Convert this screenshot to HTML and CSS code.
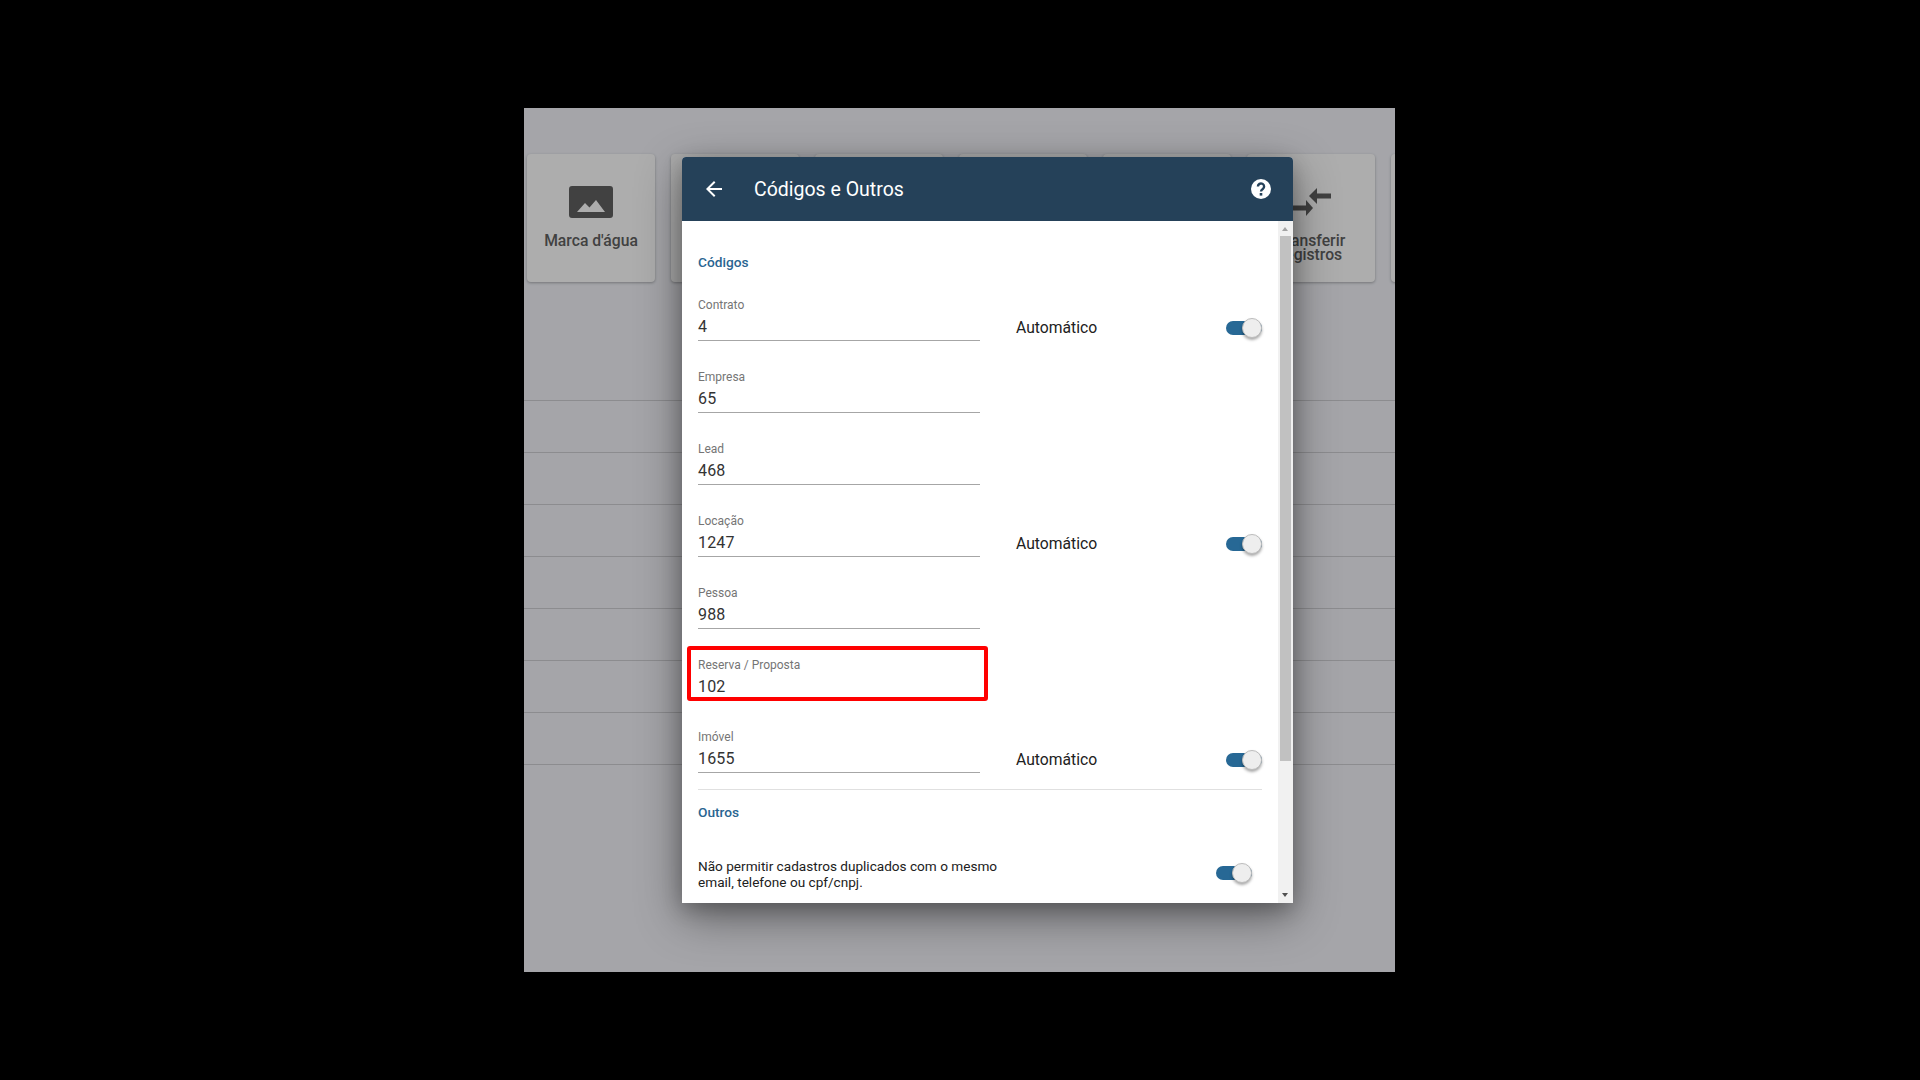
FILE: index.html
```html
<!DOCTYPE html>
<html lang="pt-BR">
<head>
    <meta charset="UTF-8">
    <meta name="viewport" content="width=device-width, initial-scale=1.0">
    <title>Códigos e Outros</title>
    <link rel="stylesheet" href="styles.css">
</head>
<body>

    <div class="stage">
        <!-- Page behind the dialog -->
        <div class="cards">
            <div class="card">
                <div class="card-icon">
                    <svg width="44" height="32" viewBox="0 0 44 32"><path fill-rule="evenodd" d="M3 0h38a3 3 0 0 1 3 3v26a3 3 0 0 1-3 3H3a3 3 0 0 1-3-3V3a3 3 0 0 1 3-3zM8 26h28l-9-12-6.500 7.500L16 17z" fill="#616161"/></svg>
                </div>
                <span class="card-label">Marca d'água</span>
            </div>
            <div class="card"></div>
            <div class="card"></div>
            <div class="card"></div>
            <div class="card"></div>
            <div class="card">
                <div class="card-icon">
                    <svg width="40" height="28" viewBox="0 0 40 28"><path d="M0 17.500h15V12l7 8-7 8v-5.500H0z M40 10.500H26V16l-8-8 8-8v5.500h14z" fill="#616161"/></svg>
                </div>
                <span class="card-label">Transferir<br>registros</span>
            </div>
            <div class="card"></div>
        </div>
        <div class="rows">
            <div class="row"></div>
            <div class="row"></div>
            <div class="row"></div>
            <div class="row"></div>
            <div class="row"></div>
            <div class="row"></div>
            <div class="row"></div>
            <div class="row"></div>
        </div>

        <div class="backdrop"></div>

        <div class="dialog">
            <header class="dialog-header">
                <svg width="24" height="24" viewBox="0 0 24 24"><path d="M20 11H7.830l5.590-5.590L12 4l-8 8 8 8 1.410-1.410L7.830 13H20v-2z" fill="#fff"/></svg>
                <h1 class="dialog-title">Códigos e Outros</h1>
                <svg class="help-icon" width="24" height="24" viewBox="0 0 24 24">
                    <circle cx="12" cy="12" r="10" fill="#fff"/>
                    <path d="M8.900 9.400a3.100 3 0 1 1 4.900 2.500c-1.200.8-1.800 1.300-1.800 2.600" fill="none" stroke="#254159" stroke-width="2.400"/>
                    <rect x="10.700" y="16" width="2.600" height="2.600" fill="#254159"/>
                </svg>
            </header>

            <div class="dialog-body">
                <div class="dialog-content">
                    <h2 class="section-title section-first">Códigos</h2>

                    <div class="field-list">
                        <div class="field-row">
                            <div class="field">
                                <label>Contrato</label>
                                <div class="field-value">4</div>
                            </div>
                            <span class="auto-label">Automático</span>
                            <span class="toggle field-toggle"><span class="knob"></span></span>
                        </div>
                        <div class="field-row">
                            <div class="field">
                                <label>Empresa</label>
                                <div class="field-value">65</div>
                            </div>
                        </div>
                        <div class="field-row">
                            <div class="field">
                                <label>Lead</label>
                                <div class="field-value">468</div>
                            </div>
                        </div>
                        <div class="field-row">
                            <div class="field">
                                <label>Locação</label>
                                <div class="field-value">1247</div>
                            </div>
                            <span class="auto-label">Automático</span>
                            <span class="toggle field-toggle"><span class="knob"></span></span>
                        </div>
                        <div class="field-row">
                            <div class="field">
                                <label>Pessoa</label>
                                <div class="field-value">988</div>
                            </div>
                        </div>
                        <div class="field-row">
                            <div class="field">
                                <label>Reserva / Proposta</label>
                                <div class="field-value">102</div>
                                <div class="highlight"></div>
                            </div>
                        </div>
                        <div class="field-row">
                            <div class="field">
                                <label>Imóvel</label>
                                <div class="field-value">1655</div>
                            </div>
                            <span class="auto-label">Automático</span>
                            <span class="toggle field-toggle"><span class="knob"></span></span>
                        </div>
                    </div>

                    <div class="divider"></div>

                    <h2 class="section-title">Outros</h2>

                    <div class="option-row">
                        <p class="option-text">Não permitir cadastros duplicados com o mesmo email, telefone ou cpf/cnpj.</p>
                        <span class="toggle option-toggle"><span class="knob"></span></span>
                    </div>
                </div>

                <div class="scrollbar">
                    <span class="arrow-up"></span>
                    <div class="scroll-thumb"></div>
                    <span class="arrow-down"></span>
                </div>
            </div>
        </div>
    </div>

</body>
</html>
```

FILE: styles.css
```css
* {
    box-sizing: border-box;
}

html, body {
    height: 100%;
}

body {
    margin: 0;
    background-color: #000;
    font-family: Roboto, sans-serif;
    display: flex;
    align-items: center;
    justify-content: center;
    overflow: hidden;
}

.stage {
    position: relative;
    width: 871px;
    height: 864px;
    margin-right: 1px;
    background-color: #f3f4fa;
    overflow: hidden;
}

/* Page behind the dialog */
.cards {
    display: flex;
    gap: 16px;
    padding: 46px 0 0 3px;
    height: 241px;
}

.card {
    flex: 0 0 128px;
    height: 128px;
    background-color: #fff;
    border-radius: 4px;
    box-shadow: 0 1px 3px rgba(0, 0, 0, 0.3);
    display: flex;
    flex-direction: column;
    align-items: center;
    padding-top: 32px;
}

.card-icon {
    flex: none;
    height: 32px;
    display: flex;
    align-items: center;
}

.card-label {
    margin-top: 16px;
    font-size: 15.700px;
    line-height: 14px;
    font-weight: 500;
    color: #616161;
    text-align: center;
}

.row {
    height: 52px;
    border-bottom: 1px solid #cfcfd3;
}

.backdrop {
    position: absolute;
    inset: 0;
    background-color: rgba(0, 0, 0, 0.32);
}

/* Dialog */
.dialog {
    position: absolute;
    left: 158px;
    top: 49px;
    width: 611px;
    height: 746px;
    background-color: #fff;
    border-radius: 4px 4px 0 0;
    display: flex;
    flex-direction: column;
    box-shadow: 0 14px 46px rgba(0, 0, 0, 0.42), 0 6px 20px rgba(0, 0, 0, 0.22);
}

.dialog-header {
    flex: 0 0 64px;
    background-color: #254159;
    border-radius: 4px 4px 0 0;
    display: flex;
    align-items: center;
    padding: 0 20px;
    color: #fff;
}

.dialog-title {
    flex: none;
    margin: 2px 0 0 28px;
    font-size: 19.500px;
    font-weight: 400;
    line-height: 24px;
}

.help-icon {
    margin-left: auto;
}

.dialog-body {
    flex: 1;
    display: flex;
    min-height: 0;
}

.dialog-content {
    flex: 1;
    padding: 0 16px;
    overflow: hidden;
}

.section-title {
    margin: 0;
    height: 68px;
    padding-top: 14px;
    font-size: 13.700px;
    line-height: 16px;
    font-weight: 500;
    color: #2a6591;
}

.section-first {
    height: 76px;
    padding-top: 33px;
}

.field-list {
    display: flex;
    flex-direction: column;
    gap: 12px;
}

.field-row {
    display: flex;
    align-items: flex-start;
    height: 60px;
}

.field {
    position: relative;
    flex: 0 0 282px;
    height: 44px;
    padding-top: 1px;
    border-bottom: 1px solid #a6a6a6;
}

.field label {
    display: block;
    font-size: 12px;
    line-height: 14px;
    color: #757575;
}

.field-value {
    margin-top: 5px;
    font-size: 16px;
    line-height: 20px;
    letter-spacing: 0.15px;
    color: #333;
}

.highlight {
    position: absolute;
    left: -11px;
    top: -11px;
    width: 301px;
    height: 55px;
    border: 4px solid #ff0000;
    border-radius: 3px;
}

.auto-label {
    flex: 1;
    margin: 21px 0 0 36px;
    font-size: 15.700px;
    line-height: 20px;
    color: #212121;
}

.toggle {
    position: relative;
    flex: none;
    width: 36px;
    height: 14px;
    border-radius: 7px;
    background-color: #276895;
}

.field-toggle {
    margin-top: 24px;
}

.option-toggle {
    margin-top: -2px;
}

.knob {
    position: absolute;
    right: 0;
    top: -3px;
    width: 20px;
    height: 20px;
    border-radius: 50%;
    background-color: #eee;
    border: 1px solid #bdbdbd;
    box-shadow: 0 2px 3px rgba(0, 0, 0, 0.35);
}

.divider {
    border-top: 1px solid #e0e0e0;
}

.option-row {
    display: flex;
    align-items: center;
    justify-content: space-between;
    padding-right: 10px;
}

.option-text {
    margin: 0;
    width: 320px;
    font-size: 13.600px;
    line-height: 16px;
    color: #212121;
}

/* Scrollbar drawn by hand, headless browsers hide the native one */
.scrollbar {
    position: relative;
    flex: 0 0 15px;
    background-color: #f1f1f1;
}

.scroll-thumb {
    position: absolute;
    left: 2px;
    top: 15px;
    width: 11px;
    height: 525px;
    background-color: #c1c1c1;
}

.arrow-up,
.arrow-down {
    position: absolute;
    left: 4px;
    width: 0;
    height: 0;
    border-left: 3.500px solid transparent;
    border-right: 3.500px solid transparent;
}

.arrow-up {
    top: 6px;
    border-bottom: 4px solid #a3a3a3;
}

.arrow-down {
    bottom: 6px;
    border-top: 4px solid #505050;
}
```
